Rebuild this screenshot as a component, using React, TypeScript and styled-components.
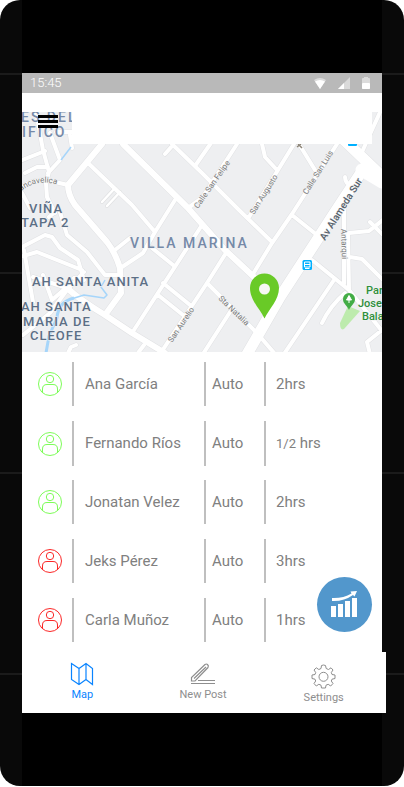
import React from "react";
import styled, { createGlobalStyle } from "styled-components";

const GlobalStyle = createGlobalStyle`
  *, *::before, *::after { box-sizing: border-box; }
  body {
    margin: 0;
    background: #ffffff;
    font-family: Roboto, "Liberation Sans", sans-serif;
  }
`;

const seam = (at: number) =>
  `linear-gradient(#1b1b1b, #1b1b1b) 0 ${at}px / 100% 2px no-repeat`;

const Phone = styled.div`
  display: flex;
  flex-direction: column;
  min-height: calc(100vh - 1px);
  padding: 73px 22px;
  border-radius: 20px;
  overflow: hidden;
  background:
    linear-gradient(#000000, #000000) 22px 0 / calc(100% - 44px) 100% no-repeat,
    ${seam(73)}, ${seam(272)}, ${seam(472)}, ${seam(673)},
    #090909;
`;

const Screen = styled.main`
  display: flex;
  flex-direction: column;
  background: #ffffff;
`;

const StatusBar = styled.div`
  display: flex;
  align-items: center;
  justify-content: space-between;
  height: 20px;
  padding: 0 11px 0 8px;
  background: #b9b9b9;
  color: #ffffff;
  font-size: 13px;
  font-weight: 300;
  line-height: 20px;
`;

const StatusIcons = styled.div`
  display: flex;
  align-items: center;
  gap: 10px;
`;

const MapSection = styled.section`
  position: relative;
  margin-top: 19px;
  height: 240px;
`;

const MapDrawing = styled.svg`
  display: block;
  width: 100%;
  height: 100%;
`;

const MapHeader = styled.header`
  position: absolute;
  inset: 0 10px auto 0;
  display: flex;
  height: 32px;
`;

const MenuButton = styled.button`
  display: flex;
  flex-direction: column;
  gap: 2px;
  width: 50px;
  padding: 3px 14px 0 16px;
  border: 0;
  background: none;
`;

const MenuLine = styled.span`
  height: 3px;
  width: 20px;
  background: #000000;
`;

const HeaderPanel = styled.div`
  flex: 1;
  background: #ffffff;
`;

const ListSection = styled.section`
  position: relative;
`;

const PeopleList = styled.ul`
  display: flex;
  flex-direction: column;
  gap: 15px;
  margin: 0;
  padding: 10px 16px;
  list-style: none;
`;

const PersonRow = styled.li`
  display: grid;
  grid-template-columns: 34px 132px 60px 1fr;
  align-items: center;
  height: 44px;
`;

const Cell = styled.span<{ $inset: number }>`
  height: 100%;
  padding-left: ${(p) => p.$inset}px;
  border-left: 2px solid #bfbfbf;
  color: #808080;
  font-size: 15px;
  line-height: 44px;
  white-space: nowrap;
`;

const Fraction = styled.span`
  font-size: 13px;
`;

const Avatar = styled.svg<{ $color: string }>`
  width: 24px;
  height: 24px;
  fill: none;
  stroke: ${(p) => p.$color};
`;

const ChartButton = styled.button`
  position: absolute;
  right: 10px;
  bottom: 20px;
  width: 55px;
  height: 55px;
  padding: 0;
  border: 0;
  border-radius: 50%;
  background: #5297cc;
`;

const TabBar = styled.nav`
  display: flex;
  width: calc(100% + 4px);
  height: 61px;
  padding-right: 2px;
  background: #ffffff;
`;

const Tab = styled.a<{ $active?: boolean; $top: number }>`
  display: flex;
  flex: 1;
  flex-direction: column;
  align-items: center;
  gap: 2px;
  padding-top: ${(p) => p.$top}px;
  color: ${(p) => (p.$active ? "#0a84ff" : "#8e8e8e")};
  font-size: 11px;
  line-height: 14px;
  text-decoration: none;
`;

const wideRoads = [
  "M102 144 L68 185 Q68 195 75 205 L107 242 Q115 252 120 268 L121 293 L105 315",
  "M123 144 L187 207 L225 250 L254 277",
  "M67 288 Q80 300 105 315 L132 333 L165 353",
];

const avenues = ["M364 168 L335 212 L317 240 L280 297 L246 356", "M344 140 L388 182"];

const roads = [
  "M87 162 L132 205 L155 232",
  "M152 248 L173 265",
  "M175 200 L155 232 L143 253 L122 267",
  "M115 250 L130 238",
  "M172 144 L202 173 L239 210 L272 242",
  "M165 154 L173 145 M195 166 L211 143",
  "M237 144 L202 198 L188 208",
  "M262 144 L265 157 L277 170",
  "M294 144 L249 217",
  "M299 144 L315 170",
  "M337 144 L292 214 L272 243 L253 274",
  "M381 110 L371 132 L362 152",
  "M292 215 L317 235",
  "M312 260 L349 290 L382 331",
  "M344 210 L344 284",
  "M348 234 L349 290",
  "M349 233 L369 231 L384 219 M370 222 L384 236",
  "M350 257 L362 259 L384 281",
  "M334 280 L284 354",
  "M345 293 Q330 306 322 323",
  "M382 330 L367 342 L370 354",
  "M345 177 Q345 184 352 185",
  "M207 283 L257 333 L275 354",
  "M226 253 L207 283 L160 354",
  "M230 312 L203 354",
  "M202 225 L132 333",
  "M163 283 L190 305",
  "M158 295 L183 315",
  "M60 212 L67 235 L87 252 L105 275 L118 275",
  "M55 212 L49 217",
  "M20 248 L45 235 L52 237 L60 248 L78 260 L84 280 L74 278",
  "M84 272 L67 290 L50 313 L23 335",
  "M20 257 L37 252 L82 270",
  "M24 250 L33 302 M33 277 L67 288 M43 275 L52 300 L67 287",
  "M20 161 L45 151",
  "M25 173 L37 167 L48 167",
  "M36 112 L43 150 L49 172 L46 183 L47 197 L55 213",
  "M50 133 L60 160 L48 173",
  "M70 135 L72 148 M56 132 L72 132",
  "M20 188 Q38 176 55 182 L68 185",
  "M22 193 L30 208",
  "M68 353 L71 347 L76 345 M138 353 L144 345",
];

const lanes = ["M115 188 L102 202", "M120 192 L107 206"];

type Label = {
  text: string;
  x: number;
  y: number;
  size: number;
  turn?: number;
  kind: "area" | "town" | "street" | "avenue" | "park";
};

const labels: Label[] = [
  { text: "ES DEL", x: 21, y: 122, size: 13, kind: "town" },
  { text: "IFICO", x: 22, y: 137, size: 13, kind: "town" },
  { text: "VILLA MARINA", x: 130, y: 248, size: 13, kind: "town" },
  { text: "VIÑA", x: 29, y: 213, size: 12, kind: "area" },
  { text: "TAPA 2", x: 21, y: 227, size: 12, kind: "area" },
  { text: "AH SANTA ANITA", x: 32, y: 286, size: 12, kind: "area" },
  { text: "AH SANTA", x: 21, y: 311, size: 12, kind: "area" },
  { text: "MARIA DE", x: 23, y: 326, size: 12, kind: "area" },
  { text: "CLEOFE", x: 30, y: 340, size: 12, kind: "area" },
  { text: "Calle San Felipe", x: 198, y: 209, size: 8, turn: -55, kind: "street" },
  { text: "San Augusto", x: 254, y: 215, size: 8, turn: -58, kind: "street" },
  { text: "Calle San Luis", x: 307, y: 195, size: 8, turn: -58, kind: "street" },
  { text: "San Aurelio", x: 172, y: 343, size: 8, turn: -56, kind: "street" },
  { text: "Sta Natalia", x: 218, y: 299, size: 8, turn: 44, kind: "street" },
  { text: "Antarqui", x: 341, y: 229, size: 8, turn: 88, kind: "street" },
  { text: "Av Alameda Sur", x: 325, y: 241, size: 10, turn: -58, kind: "avenue" },
  { text: "Par", x: 366, y: 294, size: 11, kind: "park" },
  { text: "Jose", x: 358, y: 307, size: 11, kind: "park" },
  { text: "Bala", x: 362, y: 320, size: 11, kind: "park" },
];

const labelColors: Record<Label["kind"], string> = {
  area: "#5c6f86",
  town: "#7589a8",
  street: "#7b7b7b",
  avenue: "#56616b",
  park: "#2f8f3c",
};

const labelSpacing: Record<Label["kind"], number> = {
  area: 1,
  town: 2,
  street: 0,
  avenue: 0,
  park: 0,
};

const MapLabel = styled.text<{ $kind: Label["kind"]; $size: number }>`
  font-size: ${(p) => (p.$kind === "area" || p.$kind === "town" ? p.$size + 1 : p.$size)}px;
  fill: ${(p) => labelColors[p.$kind]};
  font-weight: ${(p) => (p.$kind === "street" ? 400 : 500)};
  letter-spacing: ${(p) => labelSpacing[p.$kind]}px;
  stroke: #f2f3f4;
  stroke-width: 1px;
  paint-order: stroke;
`;

function CityMap() {
  return (
    <MapDrawing viewBox="22 112 360 240" preserveAspectRatio="xMidYMid slice" role="img" aria-label="Villa Marina map">
      <defs>
        <path id="huancavelica" d="M21 191 Q38 178 58 185" />
      </defs>
      <rect x="-400" y="112" width="1200" height="240" fill="#eeeff1" />
      <g fill="none" stroke="#e0e1e3" strokeLinejoin="round" strokeLinecap="round">
        <path d={roads.join(" ")} strokeWidth="5" />
        <path d={lanes.join(" ")} strokeWidth="4" />
        <path d={wideRoads.join(" ")} strokeWidth="7" />
        <path d={avenues.join(" ")} strokeWidth="12" />
      </g>
      <g fill="none" stroke="#ffffff" strokeLinejoin="round" strokeLinecap="round">
        <path d={roads.join(" ")} strokeWidth="4" />
        <path d={lanes.join(" ")} strokeWidth="2.5" />
        <path d={wideRoads.join(" ")} strokeWidth="6" />
        <path d={avenues.join(" ")} strokeWidth="11" />
        <path d="M362 170 L382 182" strokeWidth="13" />
      </g>
      <g fill="none" stroke="#a6d5fa" strokeLinejoin="round">
        <path d="M71 147 L61 160" strokeWidth="1.5" />
        <path d="M105 280 L101 287 L107 295 L104 298 L84 295 L68 300" strokeWidth="1.5" />
        <path d="M74 298 Q58 302 57 318 L49 336 L46 353" strokeWidth="3" />
      </g>
      <path d="M348 306 L360 311 L344 329 Q340 331 340 323 Z" fill="#bdebad" />
      {labels.map((l) => (
        <MapLabel
          key={l.text}
          $kind={l.kind}
          $size={l.size}
          x={l.x}
          y={l.y}
          transform={l.turn ? `rotate(${l.turn} ${l.x} ${l.y})` : undefined}
        >
          {l.text}
        </MapLabel>
      ))}
      <MapLabel $kind="street" $size={8}>
        <textPath href="#huancavelica">ancavelica</textPath>
      </MapLabel>
      <path d="M298 144 L302 148 M297 147 L301 144" stroke="#8d8578" strokeWidth="1.5" />
      <rect x="348" y="137" width="9" height="9" rx="1" fill="#00b0ff" />
      <g>
        <rect x="302.5" y="260" width="9.5" height="10" rx="1.5" fill="#00b0ff" />
        <path d="M304.5 262 H310 V267 H304.500 Z M304.5 264.5 H310 M305 268.5 L309.5 268.5" fill="none" stroke="#fff" />
      </g>
      <path d="M349 310 C347 305 343 304 343 299 A6 6 0 0 1 355 299 C355 304 351 305 349 310 Z" fill="#43ad46" />
      <path d="M349 295.5 L351.500 300 H346.500 Z M349 299 V303" fill="#fff" stroke="#fff" strokeLinejoin="round" />
      <path
        d="M264.5 318.5 C260 309 250 300 250 288 A14.5 14.5 0 0 1 279 288 C279 300 269 309 264.5 318.5 Z"
        fill="#69ca27"
      />
      <circle cx="264.5" cy="289" r="5.5" fill="#f6f7f5" />
    </MapDrawing>
  );
}

const green = "#7dfc58";
const red = "#fb2727";

const people = [
  { name: "Ana García", color: green, mode: "Auto", time: "2hrs" },
  { name: "Fernando Ríos", color: green, mode: "Auto", fraction: "1/2", time: " hrs" },
  { name: "Jonatan Velez", color: green, mode: "Auto", time: "2hrs" },
  { name: "Jeks Pérez", color: red, mode: "Auto", time: "3hrs" },
  { name: "Carla Muñoz", color: red, mode: "Auto", time: "1hrs" },
];

const GEAR =
  "M10.5 1.5 Q12.5 0.5 14.5 1.5 L15.2 4.5 L17.5 5.5 L20 3.8 L22 6 L20.3 8.5 L21 10.5 L24 11 V14.5 L21 15.2 L20.3 17 L22 19.5 L19.7 22 L17.2 20.3 L15 21.2 L14.5 24 H10.5 L10 21.2 L7.8 20.3 L5.3 22 L3 19.5 L4.7 17 L4 15.2 L1 14.5 V11 L4 10.5 L4.7 8.5 L3 6 L5.3 3.8 L7.8 5.5 L10 4.5 Z";

export default function App() {
  return (
    <>
      <GlobalStyle />
      <Phone>
        <Screen>
          <StatusBar>
            <time>15:45</time>
            <StatusIcons aria-hidden="true">
              <svg width="14" height="14" viewBox="0 0 14 14">
                <path d="M1 4 Q7 0 13 4 L7 13 Z" fill="#dcdcdc" />
                <path d="M2 5.5 Q7 2.5 12 5.5 L7 13 Z" fill="#fff" />
              </svg>
              <svg width="14" height="14" viewBox="0 0 14 14">
                <path d="M13 1 V13 H1 Z" fill="#dadada" />
                <path d="M7 7 V13 H1 Z" fill="#fff" />
              </svg>
              <svg width="10" height="14" viewBox="0 0 10 14">
                <path d="M1 3 Q1 2 2 2 H3 V1 H7 V2 H8 Q9 2 9 3 V13 H1 Z" fill="#dcdcdc" />
                <rect x="1" y="7" width="8" height="6" rx="1" fill="#fff" />
              </svg>
            </StatusIcons>
          </StatusBar>

          <MapSection>
            <CityMap />
            <MapHeader>
              <MenuButton type="button" aria-label="Menu">
                <MenuLine />
                <MenuLine />
                <MenuLine />
              </MenuButton>
              <HeaderPanel />
            </MapHeader>
          </MapSection>

          <ListSection>
            <PeopleList>
              {people.map((p) => (
                <PersonRow key={p.name}>
                  <Avatar $color={p.color} viewBox="0 0 24 24" aria-hidden="true">
                    <circle cx="12" cy="12" r="11.5" />
                    <circle cx="12" cy="7" r="3.7" />
                    <path d="M4.5 20.5 V17 Q4.5 12.5 9 12.5 H15 Q19.5 12.5 19.5 17 V20.5" />
                  </Avatar>
                  <Cell $inset={11}>{p.name}</Cell>
                  <Cell $inset={6}>{p.mode}</Cell>
                  <Cell $inset={10}>
                    {p.fraction && <Fraction>{p.fraction}</Fraction>}
                    {p.time}
                  </Cell>
                </PersonRow>
              ))}
            </PeopleList>
            <ChartButton type="button" aria-label="Statistics">
              <svg width="55" height="55" viewBox="0 0 55 55" fill="#fff" aria-hidden="true">
                <path d="M14 29 H19 V40 H14 Z M21 27 H26 V40 H21 Z M28 24 H33 V40 H28 Z M35 21 H40 V40 H35 Z" />
                <path d="M15 21 Q26 21.5 34.5 16.5 L33.5 14.5 L40 14 L37.5 19.5 L36 18 Q27 24.5 15 24 Z" />
              </svg>
            </ChartButton>
          </ListSection>

          <TabBar>
            <Tab href="#map" $active $top={10}>
              <svg width="24" height="24" viewBox="0 0 24 24" fill="none" stroke="currentColor" strokeWidth="1.2" aria-hidden="true">
                <path d="M1.5 1.5 L9 6.5 L16 1.5 L22.5 6.5 V22.5 L16 17.5 L9 22.5 L1.5 17.5 Z M9 6.5 V22.5 M16 1.5 V17.5" />
              </svg>
              Map
            </Tab>
            <Tab href="#new-post" $top={10}>
              <svg width="26" height="24" viewBox="0 0 26 24" fill="none" stroke="currentColor" strokeWidth="1.2" aria-hidden="true">
                <path d="M1.5 19 V15.500 L15 2.5 Q16.5 1.5 17.5 2.5 Q19 4 18 5.500 L5 19 Z M4 16.5 L16 5 M8 18.5 H25 M1 21.5 H25" />
              </svg>
              New Post
            </Tab>
            <Tab href="#settings" $top={12}>
              <svg width="25" height="25" viewBox="0 0 25 25" fill="none" stroke="currentColor" strokeLinejoin="round" aria-hidden="true">
                <path d={GEAR} />
                <circle cx="12.5" cy="12.8" r="4.5" />
              </svg>
              Settings
            </Tab>
          </TabBar>
        </Screen>
      </Phone>
    </>
  );
}
